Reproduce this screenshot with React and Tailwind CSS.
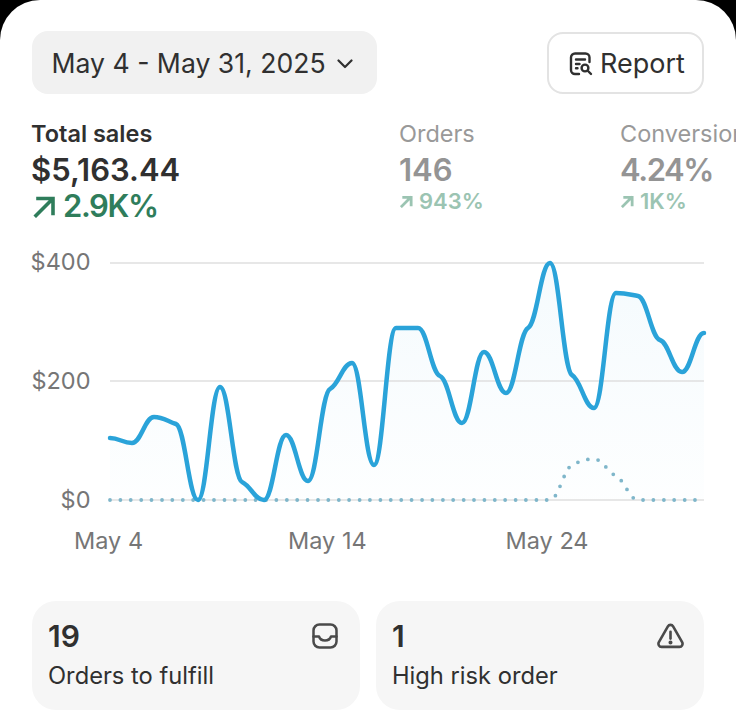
const X0 = 110, STEP = 22;
const sales = [438,443,417,424,500,387,482,500,435,481,389,363,465,328,328,376,423,352,393,328,263,375,408,293,296,340,372,333];
const orders = sales.map((_, i) => ({20:500,21:465,22:459,23:476,24:500}[i] ?? 500));

function smoothPath(ys, k, handle) {
  const n = ys.length, h = STEP;
  const d = [];
  for (let i = 0; i < n - 1; i++) d.push((ys[i + 1] - ys[i]) / h);
  const m = new Array(n).fill(0);
  for (let i = 1; i < n - 1; i++) {
    if (d[i - 1] * d[i] > 0) m[i] = k * (d[i - 1] + d[i]) / 2;
  }
  let p = `M${X0} ${ys[0]}`;
  for (let i = 0; i < n - 1; i++) {
    const x = X0 + i * h;
    p += ` C${x + h * handle} ${ys[i] + m[i] * h * handle} ${x + h * (1 - handle)} ${ys[i + 1] - m[i + 1] * h * handle} ${x + h} ${ys[i + 1]}`;
  }
  return p;
}

const UP = 240;
function Chart() {
  const line = smoothPath(sales, 0.18, 0.42);
  return (
    <svg width="736" height="320" viewBox={`0 ${UP} 736 320`} className="block shrink-0">
      <defs>
        <linearGradient id="fill" x1="0" y1="263" x2="0" y2="500" gradientUnits="userSpaceOnUse">
          <stop offset="0" stopColor="#2ba3d8" stopOpacity="0.05" />
          <stop offset="1" stopColor="#2ba3d8" stopOpacity="0.008" />
        </linearGradient>
      </defs>
      <path d={`${line} L704 500 L110 500 Z`} fill="url(#fill)" />
      {[263, 381, 500].map((y) => (
        <line key={y} x1="110" x2="704" y1={y} y2={y} stroke="#dfdfdf" strokeWidth="1.5" />
      ))}
      <g fill="#767676" fontSize="23.5" fontFamily="Inter, sans-serif">
        <text x="90.500" y="270" textAnchor="end">$400</text>
        <text x="90.500" y="389" textAnchor="end">$200</text>
        <text x="90.500" y="508" textAnchor="end">$0</text>
        <text x="74" y="549">May 4</text>
        <text x="288" y="549">May 14</text>
        <text x="505.500" y="549">May 24</text>
      </g>
      <path d={smoothPath(orders, 0.5, 0.38)} fill="none" stroke="#7fb6ca" strokeWidth="3.800" strokeLinecap="round" strokeDasharray="0 10.4" />
      <path d={line} fill="none" stroke="#2aa3d9" strokeWidth="4.500" strokeLinecap="round" strokeLinejoin="round" />
    </svg>
  );
}

function ArrowBig() {
  return (
    <svg width="24" height="24" viewBox="0 0 24 24" fill="none" stroke="#2f7d5b" strokeWidth="3.600" strokeLinecap="square" className="ml-[1px]">
      <path d="M4 21.500 20 5.500M6 4.500h15v15" />
    </svg>
  );
}
function ArrowSmall() {
  return (
    <svg width="13" height="13" viewBox="0 0 14 14" fill="none" stroke="#9bc4b2" strokeWidth="3" strokeLinecap="square" className="ml-[1px]">
      <path d="M2 12 11 3M4 2.500h8v8" />
    </svg>
  );
}

function ReportIcon() {
  return (
    <svg width="26" height="26" viewBox="0 0 26 26" fill="none" stroke="#303030" strokeWidth="2.400" strokeLinecap="round" strokeLinejoin="round">
      <path d="M11 23H7a4 4 0 0 1-4-4V6.500a4 4 0 0 1 4-4h10.500a4 4 0 0 1 4 4V11" />
      <path d="M8 8.500h9M8 13h3.500M8 17.200h1.500" />
      <circle cx="17" cy="17" r="3.400" />
      <path d="M20 20l3 3" />
    </svg>
  );
}
function InboxIcon() {
  return (
    <svg width="26" height="26" viewBox="0 0 26 26" fill="none" stroke="#4a4a4a" strokeWidth="2.500" strokeLinecap="round" strokeLinejoin="round">
      <rect x="1.500" y="1.500" width="23" height="23" rx="6" />
      <path d="M1.500 13.500h5.500c1 3 3 4 6 4s5-1 6-4h5.500" />
    </svg>
  );
}
function AlertIcon() {
  return (
    <svg width="27" height="27" viewBox="0 0 26 26" fill="none" stroke="#4a4a4a" strokeWidth="2.500" strokeLinecap="round" strokeLinejoin="round" className="mr-[-2px]">
      <path d="M10.500 3.200c1.100-1.900 3.900-1.900 5 0l8.700 15.300c1.100 1.900-.3 4.500-2.500 4.500H4.300c-2.200 0-3.600-2.600-2.500-4.500z" />
      <path d="M13 8.500v6.500" />
      <circle cx="13" cy="18.800" r="0.700" fill="#4a4a4a" />
    </svg>
  );
}

function Stat({ w, label, value, delta, primary, tight }) {
  return (
    <div className={`shrink-0 ${w}`}>
      <div className={primary ? "text-[23.5px] leading-[30px] font-semibold text-[#303030]" : "text-[23.5px] leading-[30px] font-normal text-[#999999]"}>{label}</div>
      <div className={`mt-[3px] text-[31px] leading-[36px] font-semibold ${primary ? "text-[#303030]" : "text-[#949494]"} ${tight ? "tracking-[-1.4px]" : ""}`}>{value}</div>
      {primary ? (
        <div className="mt-[1px] flex items-center gap-[7px] text-[31px] leading-[34px] font-semibold tracking-[-1.4px] text-[#2f7d5b]"><ArrowBig />{delta}</div>
      ) : (
        <div className="mt-[-1px] flex items-center gap-[6px] text-[22px] leading-[28px] font-semibold text-[#9bc4b2]"><ArrowSmall />{delta}</div>
      )}
    </div>
  );
}

function Card({ value, label, icon }) {
  return (
    <div className="flex-1 h-[109px] rounded-[24px] bg-[#f6f6f6] px-[16px] pt-[17px]">
      <div className="flex h-[36px] items-center justify-between pr-[6px]">
        <span className="text-[30px] leading-[36px] font-semibold text-[#303030]">{value}</span>
        {icon}
      </div>
      <div className="mt-[5px] text-[23.7px] leading-[34px] text-[#303030]">{label}</div>
    </div>
  );
}

export default function App() {
  return (
    <div className="h-[722px] w-[736px] overflow-hidden bg-black font-['Inter',sans-serif]">
      <div className="h-[722px] overflow-hidden rounded-t-[40px] bg-white">
        <div className="flex items-center justify-between px-[32px] pt-[31px]">
          <div className="flex h-[63px] w-[345px] items-center gap-[11px] rounded-[16px] bg-[#f1f1f1] pl-[19.500px] pt-[3px] text-[26.600px] text-[#303030]">
            May 4 - May 31, 2025
            <svg width="16" height="10" viewBox="0 0 16 10" fill="none" stroke="#303030" strokeWidth="2.200" strokeLinecap="round" strokeLinejoin="round"><path d="M1.500 1.500 8 8l6.500-6.500" /></svg>
          </div>
          <div className="flex h-[62px] w-[157px] items-center justify-center gap-[6px] rounded-[16px] border-2 border-[#e3e3e3] pl-[2px] pt-[3px] text-[27px] text-[#303030]">
            <ReportIcon />
            Report
          </div>
        </div>
        <div className="mt-[25px] flex pl-[31px]">
          <Stat w="w-[368px]" label="Total sales" value="$5,163.44" delta="2.9K%" primary />
          <Stat w="w-[221px]" label="Orders" value="146" delta="943%" />
          <Stat w="w-[221px]" label="Conversion" value="4.24%" delta="1K%" tight />
        </div>
        <div className="mt-[17px]"><Chart /></div>
        <div className="mt-[41px] flex gap-[16px] px-[32px]">
          <Card value="19" label="Orders to fulfill" icon={<InboxIcon />} />
          <Card value="1" label="High risk order" icon={<AlertIcon />} />
        </div>
      </div>
    </div>
  );
}
